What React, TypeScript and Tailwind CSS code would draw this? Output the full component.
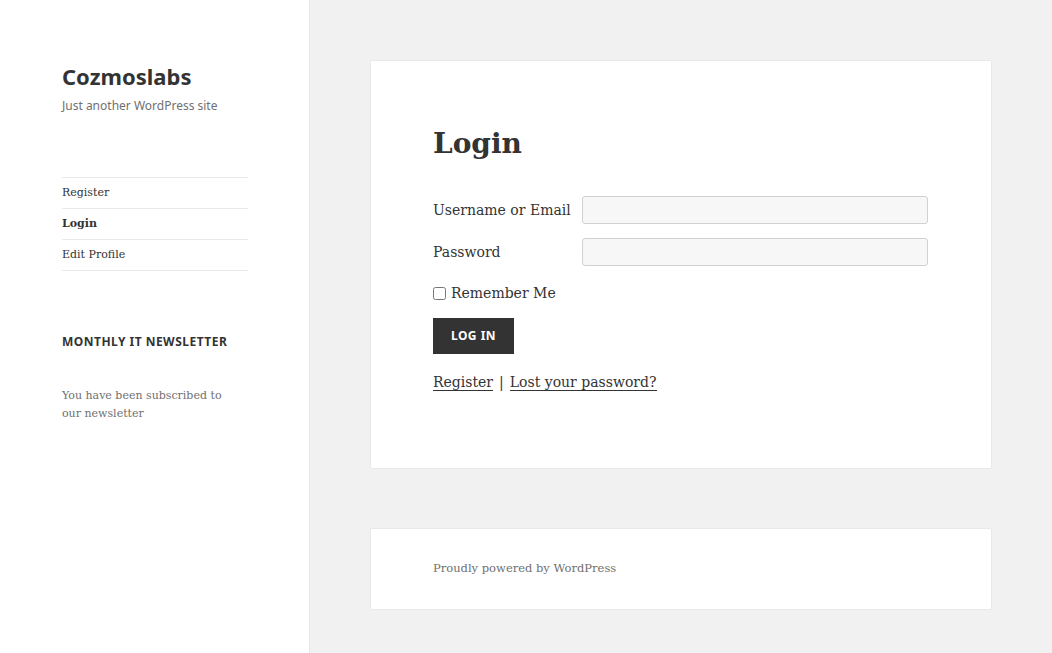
import React from 'react';

const serif = "font-['DejaVu_Serif',serif]";
const sans = "font-['Noto_Sans',sans-serif]";

const menu = [
  { label: 'Register', current: false },
  { label: 'Login', current: true },
  { label: 'Edit Profile', current: false },
];

function Sidebar() {
  return (
    <aside className="w-[310px] shrink-0 bg-white border-r border-[#e6e6e6] pl-[62px] pt-[61px]">
      <div className="w-[186px]">
        <h1 className={`${sans} text-[22px] leading-[30px] font-bold text-[#333]`}>Cozmoslabs</h1>
        <p className={`${sans} mt-[6px] text-[12px] leading-[18px] text-[#707070]`}>Just another WordPress site</p>

        <nav className="mt-[62px]">
          <ul className="border-b border-[#eaeaea]">
            {menu.map((item) => (
              <li
                key={item.label}
                className={`${serif} flex h-[31px] items-center border-t border-[#eaeaea] text-[11px] text-[#333] ${
                  item.current ? 'font-bold' : ''
                }`}
              >
                {item.label}
              </li>
            ))}
          </ul>
        </nav>

        <h2 className={`${sans} mt-[62px] text-[12px] leading-[18px] font-bold uppercase tracking-[0.04em] text-[#333]`}>
          Monthly IT Newsletter
        </h2>
        <p className={`${serif} mt-[36px] w-[172px] text-[11px] leading-[18px] text-[#707070]`}>
          You have been subscribed to our newsletter
        </p>
      </div>
    </aside>
  );
}

function Field({ label, type }: { label: string; type: string }) {
  return (
    <div className="flex items-center">
      <label className={`${serif} w-[149px] text-[14px] leading-[28px] text-[#333]`}>{label}</label>
      <input
        type={type}
        className="h-[28px] w-[346px] rounded-[3px] border border-[#d1d1d1] bg-[#f7f7f7] px-2 outline-none"
      />
    </div>
  );
}

function LoginCard() {
  return (
    <section className="w-[620px] bg-white shadow-[0_0_1px_rgba(0,0,0,0.2)] pl-[62px] pt-[63px] pb-[74px]">
      <h1 className={`${serif} text-[28px] leading-[40px] font-bold text-[#333]`}>Login</h1>

      <form className="mt-[32px]" onSubmit={(e) => e.preventDefault()}>
        <div className="flex flex-col gap-[14px]">
          <Field label="Username or Email" type="text" />
          <Field label="Password" type="password" />
        </div>

        <label className={`${serif} mt-[15px] flex h-[24px] items-center text-[14px] text-[#333]`}>
          <input type="checkbox" className="mr-[5px] h-[13px] w-[13px]" />
          Remember Me
        </label>

        <button
          type="submit"
          className={`${sans} mt-[13px] h-[36px] w-[81px] bg-[#333] text-[12px] font-bold uppercase tracking-[0.04em] text-white`}
        >
          Log In
        </button>

        <p className={`${serif} mt-[16px] text-[14px] leading-[24px] text-[#333]`}>
          <a href="#" className="border-b border-[#333]">Register</a>
          <span className="mx-[6px]">|</span>
          <a href="#" className="border-b border-[#333]">Lost your password?</a>
        </p>
      </form>
    </section>
  );
}

export default function App() {
  return (
    <div className="flex min-h-[653px] bg-[#f1f1f1]">
      <Sidebar />
      <main className="flex-1 pl-[61px] pt-[61px]">
        <LoginCard />
        <footer
          className={`${serif} mt-[61px] flex h-[80px] w-[620px] items-center bg-white pl-[62px] text-[11.5px] text-[#707070] shadow-[0_0_1px_rgba(0,0,0,0.2)]`}
        >
          Proudly powered by WordPress
        </footer>
      </main>
    </div>
  );
}
